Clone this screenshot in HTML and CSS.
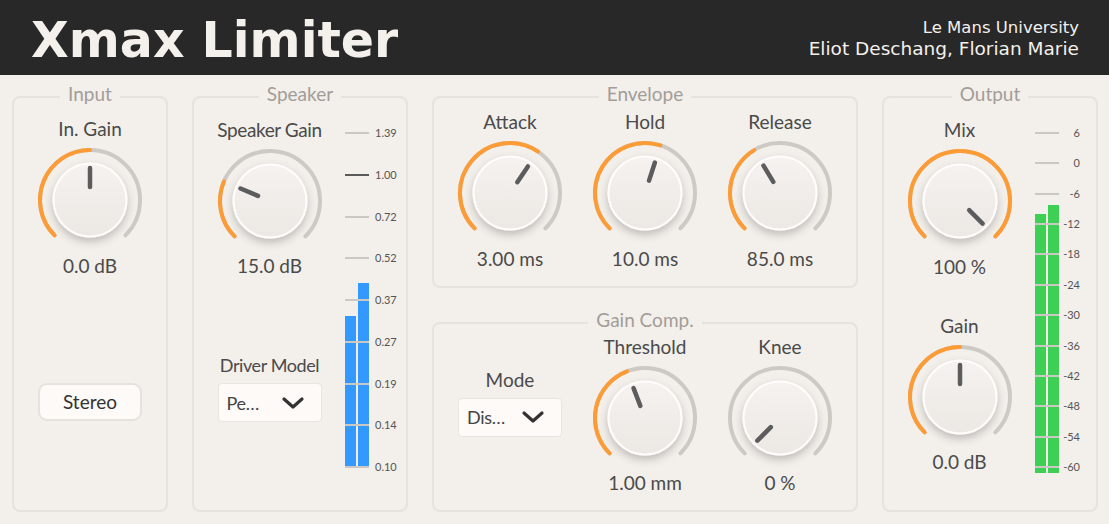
FILE: index.html
```html
<!DOCTYPE html>
<html lang="en">
<head>
<meta charset="utf-8">
<title>Xmax Limiter</title>
<link rel="stylesheet" href="styles.css">
</head>
<body>
<svg class="svg-defs" aria-hidden="true">
  <defs>
    <linearGradient id="knobGrad" x1="0" y1="0" x2="0" y2="1">
      <stop offset="0" stop-color="#f5f2ef"/>
      <stop offset="1" stop-color="#ece8e4"/>
    </linearGradient>
    <filter id="knobShadow" x="-40%" y="-40%" width="180%" height="190%">
      <feDropShadow dx="0" dy="4" stdDeviation="4" flood-color="#000" flood-opacity="0.22"/>
    </filter>
  </defs>
</svg>

<header class="topbar">
  <h1 class="brand">Xmax Limiter</h1>
  <div class="credits">
    <div class="credits-org">Le Mans University</div>
    <div class="credits-authors">Eliot Deschang, Florian Marie</div>
  </div>
</header>

<main class="rack">
  <!-- INPUT -->
  <section class="panel panel-tall">
    <h2 class="panel-title">Input</h2>
    <div class="stack stack-input">
      <div class="knob-unit">
        <div class="klabel">In. Gain</div>
        <svg class="knob" viewBox="0 0 110 110" width="110" height="110">
          <path class="knob-track" d="M19.64 90.36 A50 50 0 1 1 90.36 90.36"/>
          <path class="knob-fill" d="M19.64 90.36 A50 50 0 0 1 55 5"/>
          <circle class="knob-body" cx="55" cy="55" r="36.5"/>
          <line class="knob-pointer" x1="55" y1="42" x2="55" y2="23"/>
        </svg>
        <div class="kvalue">0.0 dB</div>
      </div>
      <button class="toggle">Stereo</button>
    </div>
  </section>

  <!-- SPEAKER -->
  <section class="panel panel-tall">
    <h2 class="panel-title">Speaker</h2>
    <div class="split">
      <div class="stack stack-speaker">
        <div class="knob-unit">
          <div class="klabel klabel-tight">Speaker Gain</div>
          <svg class="knob" viewBox="0 0 110 110" width="110" height="110">
            <path class="knob-track" d="M19.64 90.36 A50 50 0 1 1 90.36 90.36"/>
            <path class="knob-fill" d="M19.64 90.36 A50 50 0 0 1 8.97 35.46"/>
            <circle class="knob-body" cx="55" cy="55" r="36.5"/>
            <line class="knob-pointer" x1="55" y1="42" x2="55" y2="23" transform="rotate(-67 55 55)"/>
          </svg>
          <div class="kvalue">15.0 dB</div>
        </div>
        <div class="select-group select-driver">
          <div class="klabel klabel-narrow">Driver Model</div>
          <div class="select">
            <span class="select-text">Pe…</span>
            <svg class="chevron" viewBox="0 0 24 14" width="24" height="14"><polyline points="3,3 12,11 21,3"/></svg>
          </div>
        </div>
      </div>
      <div class="meter">
        <div class="meter-bars meter-bars-speaker">
          <span class="bar bar-blue" style="height:152px"></span>
          <span class="bar bar-blue" style="height:185px"></span>
        </div>
        <div class="meter-row"><span class="tick"></span><span class="mlabel">1.39</span></div>
        <div class="meter-row"><span class="tick tick-dark"></span><span class="mlabel">1.00</span></div>
        <div class="meter-row"><span class="tick"></span><span class="mlabel">0.72</span></div>
        <div class="meter-row"><span class="tick"></span><span class="mlabel">0.52</span></div>
        <div class="meter-row"><span class="tick"></span><span class="mlabel">0.37</span></div>
        <div class="meter-row"><span class="tick"></span><span class="mlabel">0.27</span></div>
        <div class="meter-row"><span class="tick"></span><span class="mlabel">0.19</span></div>
        <div class="meter-row"><span class="tick"></span><span class="mlabel">0.14</span></div>
        <div class="meter-row"><span class="tick"></span><span class="mlabel">0.10</span></div>
      </div>
    </div>
  </section>

  <!-- ENVELOPE + GAIN COMP -->
  <div class="middle">
    <section class="panel panel-envelope">
      <h2 class="panel-title">Envelope</h2>
      <div class="knob-row knob-row-env">
        <div class="knob-unit">
          <div class="klabel">Attack</div>
          <svg class="knob" viewBox="0 0 110 110" width="110" height="110">
            <path class="knob-track" d="M19.64 90.36 A50 50 0 1 1 90.36 90.36"/>
            <path class="knob-fill" d="M19.64 90.36 A50 50 0 0 1 82.96 13.55"/>
            <circle class="knob-body" cx="55" cy="55" r="36.5"/>
            <line class="knob-pointer" x1="55" y1="42" x2="55" y2="23" transform="rotate(34 55 55)"/>
          </svg>
          <div class="kvalue">3.00 ms</div>
        </div>
        <div class="knob-unit">
          <div class="klabel">Hold</div>
          <svg class="knob" viewBox="0 0 110 110" width="110" height="110">
            <path class="knob-track" d="M19.64 90.36 A50 50 0 1 1 90.36 90.36"/>
            <path class="knob-fill" d="M19.64 90.36 A50 50 0 0 1 70.45 7.44"/>
            <circle class="knob-body" cx="55" cy="55" r="36.5"/>
            <line class="knob-pointer" x1="55" y1="42" x2="55" y2="23" transform="rotate(18 55 55)"/>
          </svg>
          <div class="kvalue">10.0 ms</div>
        </div>
        <div class="knob-unit">
          <div class="klabel">Release</div>
          <svg class="knob" viewBox="0 0 110 110" width="110" height="110">
            <path class="knob-track" d="M19.64 90.36 A50 50 0 1 1 90.36 90.36"/>
            <path class="knob-fill" d="M19.64 90.36 A50 50 0 0 1 29.25 12.14"/>
            <circle class="knob-body" cx="55" cy="55" r="36.5"/>
            <line class="knob-pointer" x1="55" y1="42" x2="55" y2="23" transform="rotate(-31 55 55)"/>
          </svg>
          <div class="kvalue">85.0 ms</div>
        </div>
      </div>
    </section>

    <section class="panel panel-comp">
      <h2 class="panel-title">Gain Comp.</h2>
      <div class="knob-row knob-row-comp">
        <div class="knob-unit">
          <div class="select-group select-mode">
            <div class="klabel">Mode</div>
            <div class="select">
              <span class="select-text">Dis…</span>
              <svg class="chevron" viewBox="0 0 24 14" width="24" height="14"><polyline points="3,3 12,11 21,3"/></svg>
            </div>
          </div>
        </div>
        <div class="knob-unit">
          <div class="klabel">Threshold</div>
          <svg class="knob" viewBox="0 0 110 110" width="110" height="110">
            <path class="knob-track" d="M19.64 90.36 A50 50 0 1 1 90.36 90.36"/>
            <path class="knob-fill" d="M19.64 90.36 A50 50 0 0 1 37.08 8.32"/>
            <circle class="knob-body" cx="55" cy="55" r="36.5"/>
            <line class="knob-pointer" x1="55" y1="42" x2="55" y2="23" transform="rotate(-21 55 55)"/>
          </svg>
          <div class="kvalue">1.00 mm</div>
        </div>
        <div class="knob-unit">
          <div class="klabel">Knee</div>
          <svg class="knob" viewBox="0 0 110 110" width="110" height="110">
            <path class="knob-track" d="M19.64 90.36 A50 50 0 1 1 90.36 90.36"/>
            <circle class="knob-body" cx="55" cy="55" r="36.5"/>
            <line class="knob-pointer" x1="55" y1="42" x2="55" y2="23" transform="rotate(-135 55 55)"/>
          </svg>
          <div class="kvalue">0 %</div>
        </div>
      </div>
    </section>
  </div>

  <!-- OUTPUT -->
  <section class="panel panel-tall">
    <h2 class="panel-title">Output</h2>
    <div class="split">
      <div class="stack stack-output">
        <div class="knob-unit">
          <div class="klabel">Mix</div>
          <svg class="knob" viewBox="0 0 110 110" width="110" height="110">
            <path class="knob-track" d="M19.64 90.36 A50 50 0 1 1 90.36 90.36"/>
            <path class="knob-fill" d="M19.64 90.36 A50 50 0 1 1 90.36 90.36"/>
            <circle class="knob-body" cx="55" cy="55" r="36.5"/>
            <line class="knob-pointer" x1="55" y1="42" x2="55" y2="23" transform="rotate(135 55 55)"/>
          </svg>
          <div class="kvalue">100 %</div>
        </div>
        <div class="knob-unit knob-unit-gain">
          <div class="klabel">Gain</div>
          <svg class="knob" viewBox="0 0 110 110" width="110" height="110">
            <path class="knob-track" d="M19.64 90.36 A50 50 0 1 1 90.36 90.36"/>
            <path class="knob-fill" d="M19.64 90.36 A50 50 0 0 1 55 5"/>
            <circle class="knob-body" cx="55" cy="55" r="36.5"/>
            <line class="knob-pointer" x1="55" y1="42" x2="55" y2="23"/>
          </svg>
          <div class="kvalue">0.0 dB</div>
        </div>
      </div>
      <div class="meter meter-output">
        <div class="meter-bars meter-bars-output">
          <span class="bar bar-green" style="height:259px"></span>
          <span class="bar bar-green" style="height:268px"></span>
        </div>
        <div class="meter-row"><span class="tick"></span><span class="mlabel">6</span></div>
        <div class="meter-row"><span class="tick"></span><span class="mlabel">0</span></div>
        <div class="meter-row"><span class="tick"></span><span class="mlabel">-6</span></div>
        <div class="meter-row"><span class="tick"></span><span class="mlabel">-12</span></div>
        <div class="meter-row"><span class="tick"></span><span class="mlabel">-18</span></div>
        <div class="meter-row"><span class="tick"></span><span class="mlabel">-24</span></div>
        <div class="meter-row"><span class="tick"></span><span class="mlabel">-30</span></div>
        <div class="meter-row"><span class="tick"></span><span class="mlabel">-36</span></div>
        <div class="meter-row"><span class="tick"></span><span class="mlabel">-42</span></div>
        <div class="meter-row"><span class="tick"></span><span class="mlabel">-48</span></div>
        <div class="meter-row"><span class="tick"></span><span class="mlabel">-54</span></div>
        <div class="meter-row"><span class="tick"></span><span class="mlabel">-60</span></div>
      </div>
    </div>
  </section>
</main>
</body>
</html>
```
FILE: styles.css
```css
* { box-sizing: border-box; }

html, body {
  margin: 0;
  padding: 0;
}

body {
  width: 1109px;
  height: 524px;
  overflow: hidden;
  background: #f3efeb;
  font-family: "Lato", "Noto Sans", sans-serif;
  color: #4a4a4a;
}

.svg-defs {
  width: 0;
  height: 0;
  overflow: hidden;
  display: block;
}

/* ---------- header ---------- */
.topbar {
  height: 75px;
  background: #282828;
  display: flex;
  justify-content: space-between;
  align-items: flex-start;
  padding: 0 30px 0 31px;
  color: #f4f0ec;
}

.brand {
  margin: 0;
  padding-top: 15.5px;
  font-family: "DejaVu Sans", sans-serif;
  font-weight: bold;
  font-size: 49px;
  line-height: 49px;
  color: #f4f0ec;
}

.credits {
  padding-top: 18px;
  text-align: right;
  font-family: "DejaVu Sans", sans-serif;
}

.credits-org {
  font-size: 16.5px;
  line-height: 20px;
}

.credits-authors {
  font-size: 18.5px;
  line-height: 22px;
}

/* ---------- rack ---------- */
.rack {
  display: grid;
  grid-template-columns: 156px 216px 426px 216px;
  column-gap: 24px;
  align-items: start;
  padding: 21px 0 0 12px;
}

.panel {
  border: 2px solid #e6e2de;
  border-radius: 8px;
  display: flex;
  flex-direction: column;
}

.panel-tall { height: 416px; }
.panel-envelope { height: 192px; }
.panel-comp { height: 190px; }

.middle {
  display: flex;
  flex-direction: column;
  gap: 34px;
}

.panel-title {
  margin: -14px auto 0;
  padding: 0 8px;
  background: #f3efeb;
  font-weight: normal;
  font-size: 19px;
  line-height: 20px;
  color: #a29d98;
}

/* ---------- stacks ---------- */
.split {
  display: flex;
  align-items: flex-start;
}

.stack {
  display: flex;
  flex-direction: column;
  align-items: center;
}

.stack-input {
  margin-top: 13px;
}

.stack-speaker,
.stack-output {
  width: 151px;
  flex: none;
}

.stack-speaker { margin-top: 13.5px; }
.stack-output { margin-top: 14px; }

.knob-unit {
  display: flex;
  flex-direction: column;
  align-items: center;
  width: 135px;
}

.knob-unit-gain { margin-top: 35px; }

.klabel {
  font-size: 19px;
  line-height: 24px;
  color: #4a4a4a;
  white-space: nowrap;
}

.klabel-tight {
  letter-spacing: -0.4px;
}

.klabel-narrow {
  font-size: 18px;
  letter-spacing: -0.4px;
}

.kvalue {
  margin-top: -1.5px;
  font-size: 19px;
  line-height: 24px;
  color: #4a4a4a;
  white-space: nowrap;
}

.knob {
  display: block;
  margin-top: 4px;
  overflow: visible;
}

.knob-track,
.knob-fill {
  fill: none;
  stroke-width: 4;
  stroke-linecap: round;
}

.knob-track { stroke: #cdc9c5; }
.knob-fill { stroke: #fd9b35; }

.knob-body {
  fill: url(#knobGrad);
  stroke: #fffdfb;
  stroke-width: 2;
  filter: url(#knobShadow);
}

.knob-pointer {
  stroke: #5c5c5c;
  stroke-width: 4.5;
  stroke-linecap: round;
}

/* ---------- toggle button ---------- */
.toggle {
  margin-top: 105px;
  width: 104px;
  height: 38px;
  border: 2px solid #e6e2de;
  border-radius: 9px;
  background: #fdfaf7;
  font-family: "Lato", sans-serif;
  font-size: 19px;
  line-height: 24px;
  color: #333;
  padding: 0;
}

/* ---------- selects ---------- */
.select-group {
  display: flex;
  flex-direction: column;
  align-items: center;
}

.select-driver { margin-top: 75px; }
.select-mode { margin-top: 33.4px; }

.select {
  margin-top: 6px;
  width: 104px;
  height: 39px;
  border: 1px solid #e8e4e0;
  border-radius: 4px;
  background: #fdfaf7;
  display: flex;
  align-items: center;
  justify-content: space-between;
  padding: 0 16px 0 8px;
}

.select-text {
  font-size: 18px;
  color: #444;
  letter-spacing: -0.3px;
}

.chevron polyline {
  fill: none;
  stroke: #333;
  stroke-width: 3.2;
  stroke-linecap: round;
  stroke-linejoin: round;
}

/* ---------- rows of knobs ---------- */
.knob-row {
  display: flex;
  justify-content: center;
  align-items: flex-start;
}

.knob-row-env { margin-top: 6px; }
.knob-row-comp { margin-top: 4.6px; }

/* ---------- meters ---------- */
.meter {
  position: relative;
  margin-top: 22px;
  height: 348px;
  display: flex;
  flex-direction: column;
  justify-content: space-between;
}

.meter-row {
  position: relative;
  z-index: 1;
  height: 14px;
  display: flex;
  align-items: center;
}

.tick {
  width: 24px;
  height: 2px;
  background: #cbc7c3;
  flex: none;
}

.tick-dark { background: #5a5a5a; }

.mlabel {
  margin-left: 6px;
  font-size: 11px;
  line-height: 14px;
  color: #555;
}

.meter-output .mlabel {
  margin-left: 0;
  width: 21px;
  text-align: right;
}

.meter-bars {
  position: absolute;
  left: 0;
  width: 24px;
  display: flex;
  align-items: flex-end;
  gap: 2px;
}

.meter-bars-speaker { bottom: 6px; }
.meter-bars-output { bottom: 1px; }

.bar {
  width: 11px;
  display: block;
}

.bar-blue { background: #3399ff; }
.bar-green { background: #3ecf55; }
```
